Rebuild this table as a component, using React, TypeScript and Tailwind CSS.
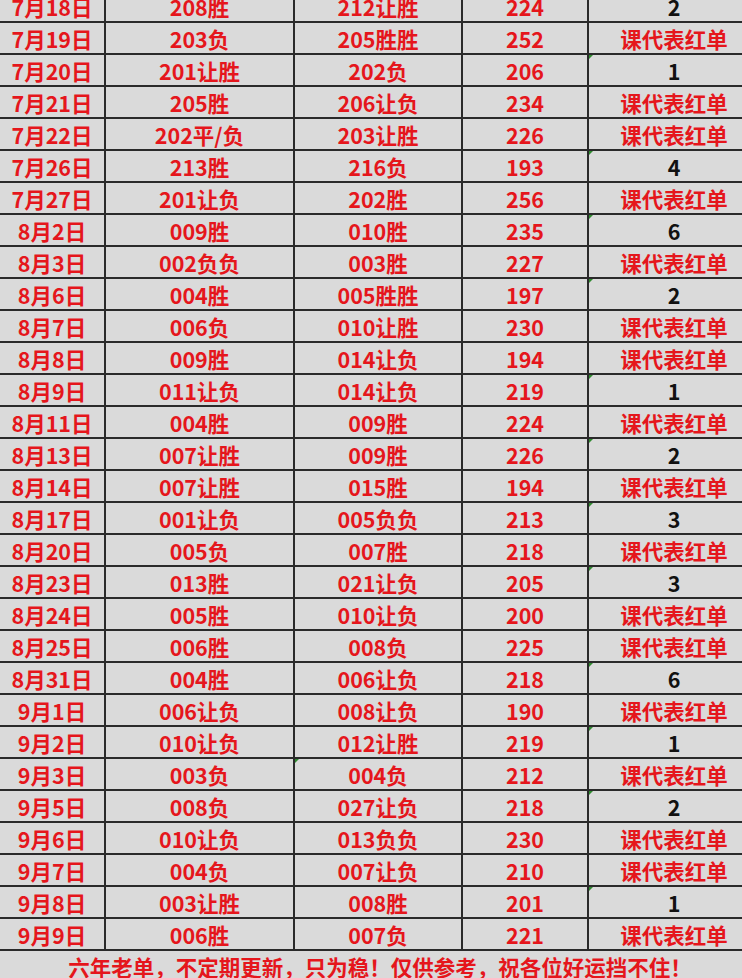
const rows: [string, string, string, string, string][] = [
  ['7月18日', '208胜', '212让胜', '224', '2'],
  ['7月19日', '203负', '205胜胜', '252', '课代表红单'],
  ['7月20日', '201让胜', '202负', '206', '1'],
  ['7月21日', '205胜', '206让负', '234', '课代表红单'],
  ['7月22日', '202平/负', '203让胜', '226', '课代表红单'],
  ['7月26日', '213胜', '216负', '193', '4'],
  ['7月27日', '201让负', '202胜', '256', '课代表红单'],
  ['8月2日', '009胜', '010胜', '235', '6'],
  ['8月3日', '002负负', '003胜', '227', '课代表红单'],
  ['8月6日', '004胜', '005胜胜', '197', '2'],
  ['8月7日', '006负', '010让胜', '230', '课代表红单'],
  ['8月8日', '009胜', '014让负', '194', '课代表红单'],
  ['8月9日', '011让负', '014让负', '219', '1'],
  ['8月11日', '004胜', '009胜', '224', '课代表红单'],
  ['8月13日', '007让胜', '009胜', '226', '2'],
  ['8月14日', '007让胜', '015胜', '194', '课代表红单'],
  ['8月17日', '001让负', '005负负', '213', '3'],
  ['8月20日', '005负', '007胜', '218', '课代表红单'],
  ['8月23日', '013胜', '021让负', '205', '3'],
  ['8月24日', '005胜', '010让负', '200', '课代表红单'],
  ['8月25日', '006胜', '008负', '225', '课代表红单'],
  ['8月31日', '004胜', '006让负', '218', '6'],
  ['9月1日', '006让负', '008让负', '190', '课代表红单'],
  ['9月2日', '010让负', '012让胜', '219', '1'],
  ['9月3日', '003负', '004负', '212', '课代表红单'],
  ['9月5日', '008负', '027让负', '218', '2'],
  ['9月6日', '010让负', '013负负', '230', '课代表红单'],
  ['9月7日', '004负', '007让负', '210', '课代表红单'],
  ['9月8日', '003让胜', '008胜', '201', '1'],
  ['9月9日', '006胜', '007负', '221', '课代表红单'],
]

// little green "number stored as text" corner marks, like Excel draws
function Mark() {
  return (
    <span className="absolute left-0 top-0 h-0 w-0 border-t-[4px] border-r-[4px] border-t-[#2f8a2f] border-r-transparent" />
  )
}

export default function App() {
  return (
    <div
      className="h-[978px] w-[742px] overflow-hidden bg-[#dadada] font-bold text-[21.5px] text-[#e5161c]"
      style={{ fontFamily: '"Noto Sans CJK SC", "Noto Sans", sans-serif' }}
    >
      <div className="-mt-[9px] w-[761px]">
        {rows.map((r, i) => {
          const isNum = /^\d+$/.test(r[4])
          return (
            <div
              key={i}
              className="grid h-8 grid-cols-[106px_189px_168px_126px_172px] border-b-2 border-[#2a2a2a] leading-none"
            >
              <div className="flex items-center justify-center border-r-2 border-[#2a2a2a] pt-px">{r[0]}</div>
              <div className="flex items-center justify-center border-r-2 border-[#2a2a2a] pt-px">{r[1]}</div>
              <div className="relative flex items-center justify-center border-r-2 border-[#2a2a2a] pt-px">
                {r[0] === '9月3日' && <Mark />}
                {r[2]}
              </div>
              <div className="flex items-center justify-center border-r-2 border-[#2a2a2a] pt-px">{r[3]}</div>
              <div className={`relative flex items-center justify-center border-r-2 border-[#2a2a2a] pt-px ${isNum ? 'text-[#111111]' : ''}`}>
                {isNum && <Mark />}
                {r[4]}
              </div>
            </div>
          )
        })}
        <div className="flex h-[27px] w-[742px] items-center justify-center pl-[18px] pt-1 text-[21.5px] leading-none">
          六年老单，不定期更新，只为稳！仅供参考，祝各位好运挡不住！
        </div>
      </div>
    </div>
  )
}
